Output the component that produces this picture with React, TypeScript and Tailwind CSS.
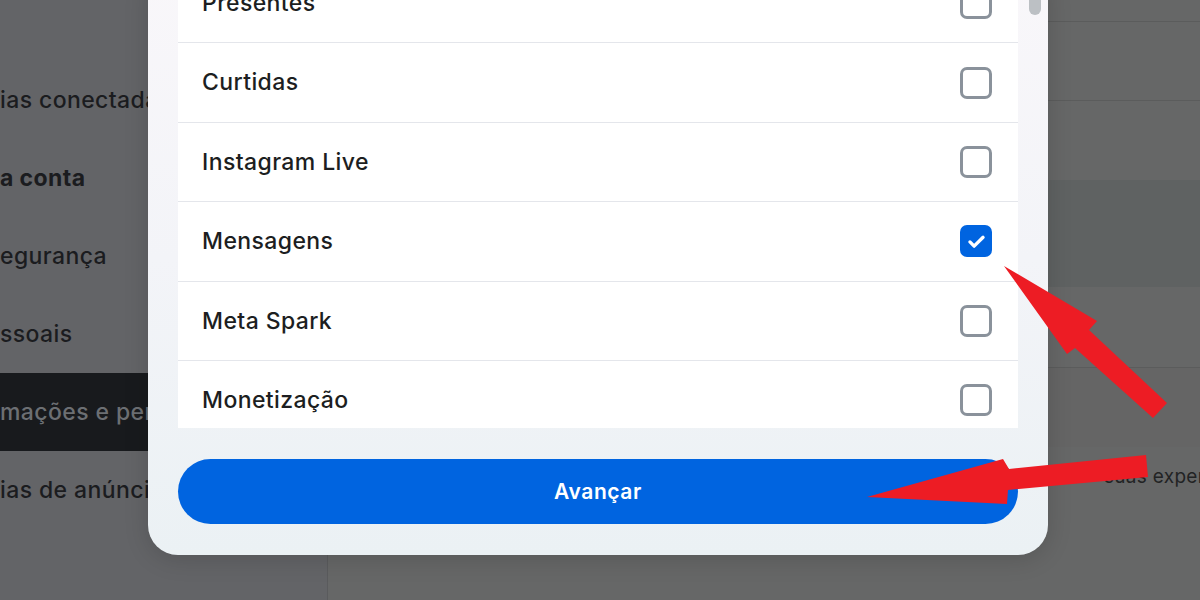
import React from "react";

const rows: { label: string; checked: boolean }[] = [
  { label: "Presentes", checked: false },
  { label: "Curtidas", checked: false },
  { label: "Instagram Live", checked: false },
  { label: "Mensagens", checked: true },
  { label: "Meta Spark", checked: false },
  { label: "Monetização", checked: false },
];

const sideItems: { label: string; bold?: boolean; active?: boolean }[] = [
  { label: "ias conectadas" },
  { label: "a conta", bold: true },
  { label: "egurança" },
  { label: "ssoais" },
  { label: "mações e permissões", active: true },
  { label: "ias de anúncios" },
];

function Checkbox({ checked }: { checked: boolean }) {
  if (checked) {
    return (
      <div className="w-[32px] h-[32px] rounded-[7px] bg-[#0064e0] flex items-center justify-center">
        <svg width="21" height="21" viewBox="0 0 24 24" fill="none">
          <path d="M4.5 12.5l4.8 4.8L19.5 7.2" stroke="white" strokeWidth="3.8" strokeLinecap="round" strokeLinejoin="round" />
        </svg>
      </div>
    );
  }
  return <div className="w-[32px] h-[32px] rounded-[7px] border-[3px] border-[#8a929b] bg-white" />;
}

export default function App() {
  return (
    <div className="relative w-[1200px] h-[600px] overflow-hidden bg-[#666767] font-['Inter','Noto_Sans',sans-serif]">
      <div className="flex h-full">
        <aside className="w-[328px] shrink-0 h-full border-r border-[#5a5b5d] bg-[#636467] pt-[61px] flex flex-col">
          {sideItems.map((it) => (
            <div
              key={it.label}
              className={`h-[78px] flex items-center ${it.active ? "bg-[#181a1d] text-[#6c6f73]" : "text-[#1b1c1f]"}`}
            >
              <span
                className={`block w-[148px] overflow-hidden whitespace-nowrap text-[23px] tracking-[0.4px] ${
                  it.bold ? "font-bold" : "font-medium"
                }`}
              >
                {it.label}
              </span>
            </div>
          ))}
        </aside>
        <main className="flex-1 min-w-0 overflow-hidden flex flex-col">
          <div className="h-[22px] border-b border-[#5b5c5c]" />
          <div className="h-[79px] border-b border-[#5b5c5c]" />
          <div className="h-[79px]" />
          <div className="h-[107px] bg-[#5f6262]" />
          <div className="h-[81px] border-b border-[#5b5c5c]" />
          <div className="h-[79px] bg-[#656565]" />
          <div className="pt-[16px] pl-[776px] whitespace-nowrap text-[19px] tracking-[0.3px] text-[#222324]">suas experiências</div>
        </main>
      </div>

      <div className="absolute left-[148px] top-[-36px] w-[900px] h-[591px] rounded-[30px] overflow-hidden bg-linear-to-b from-[#f9f7fa] via-[#f3f4f8] to-[#ebf1f4] flex flex-col shadow-[0_4px_24px_rgba(0,0,0,0.15)]">
        <div className="h-[464px] flex">
          <div className="ml-[30px] w-[840px] h-full bg-white overflow-hidden flex flex-col">
            {rows.map((r) => (
              <div
                key={r.label}
                className="h-[79.4px] shrink-0 border-b border-[#e4e6eb] flex items-center justify-between pl-[24px] pr-[26px]"
              >
                <span className="text-[23px] text-[#1c1e21] font-medium tracking-[0.4px]">{r.label}</span>
                <Checkbox checked={r.checked} />
              </div>
            ))}
          </div>
          <div className="w-[30px] pl-[11px]">
            <div className="mt-[18px] h-[33px] w-[12px] rounded-full bg-[#bcc0c4]" />
          </div>
        </div>
        <div className="px-[30px] pt-[31px] pb-[31px]">
          <button className="w-full h-[65px] rounded-full bg-[#0064e0] text-white text-[21px] font-semibold tracking-[0.6px] flex items-center justify-center">
            Avançar
          </button>
        </div>
      </div>

      <svg className="absolute inset-0 pointer-events-none" width="1200" height="600" viewBox="0 0 1200 600">
        <polygon fill="#ed1c24" points="1004,266 1097,321 1089,330 1167,403 1153,418 1075,348 1067,354" />
        <polygon fill="#ed1c24" points="867,497 1003,459 1009,469 1146,455 1148,477 1008,490 1007,504" />
      </svg>
    </div>
  );
}
